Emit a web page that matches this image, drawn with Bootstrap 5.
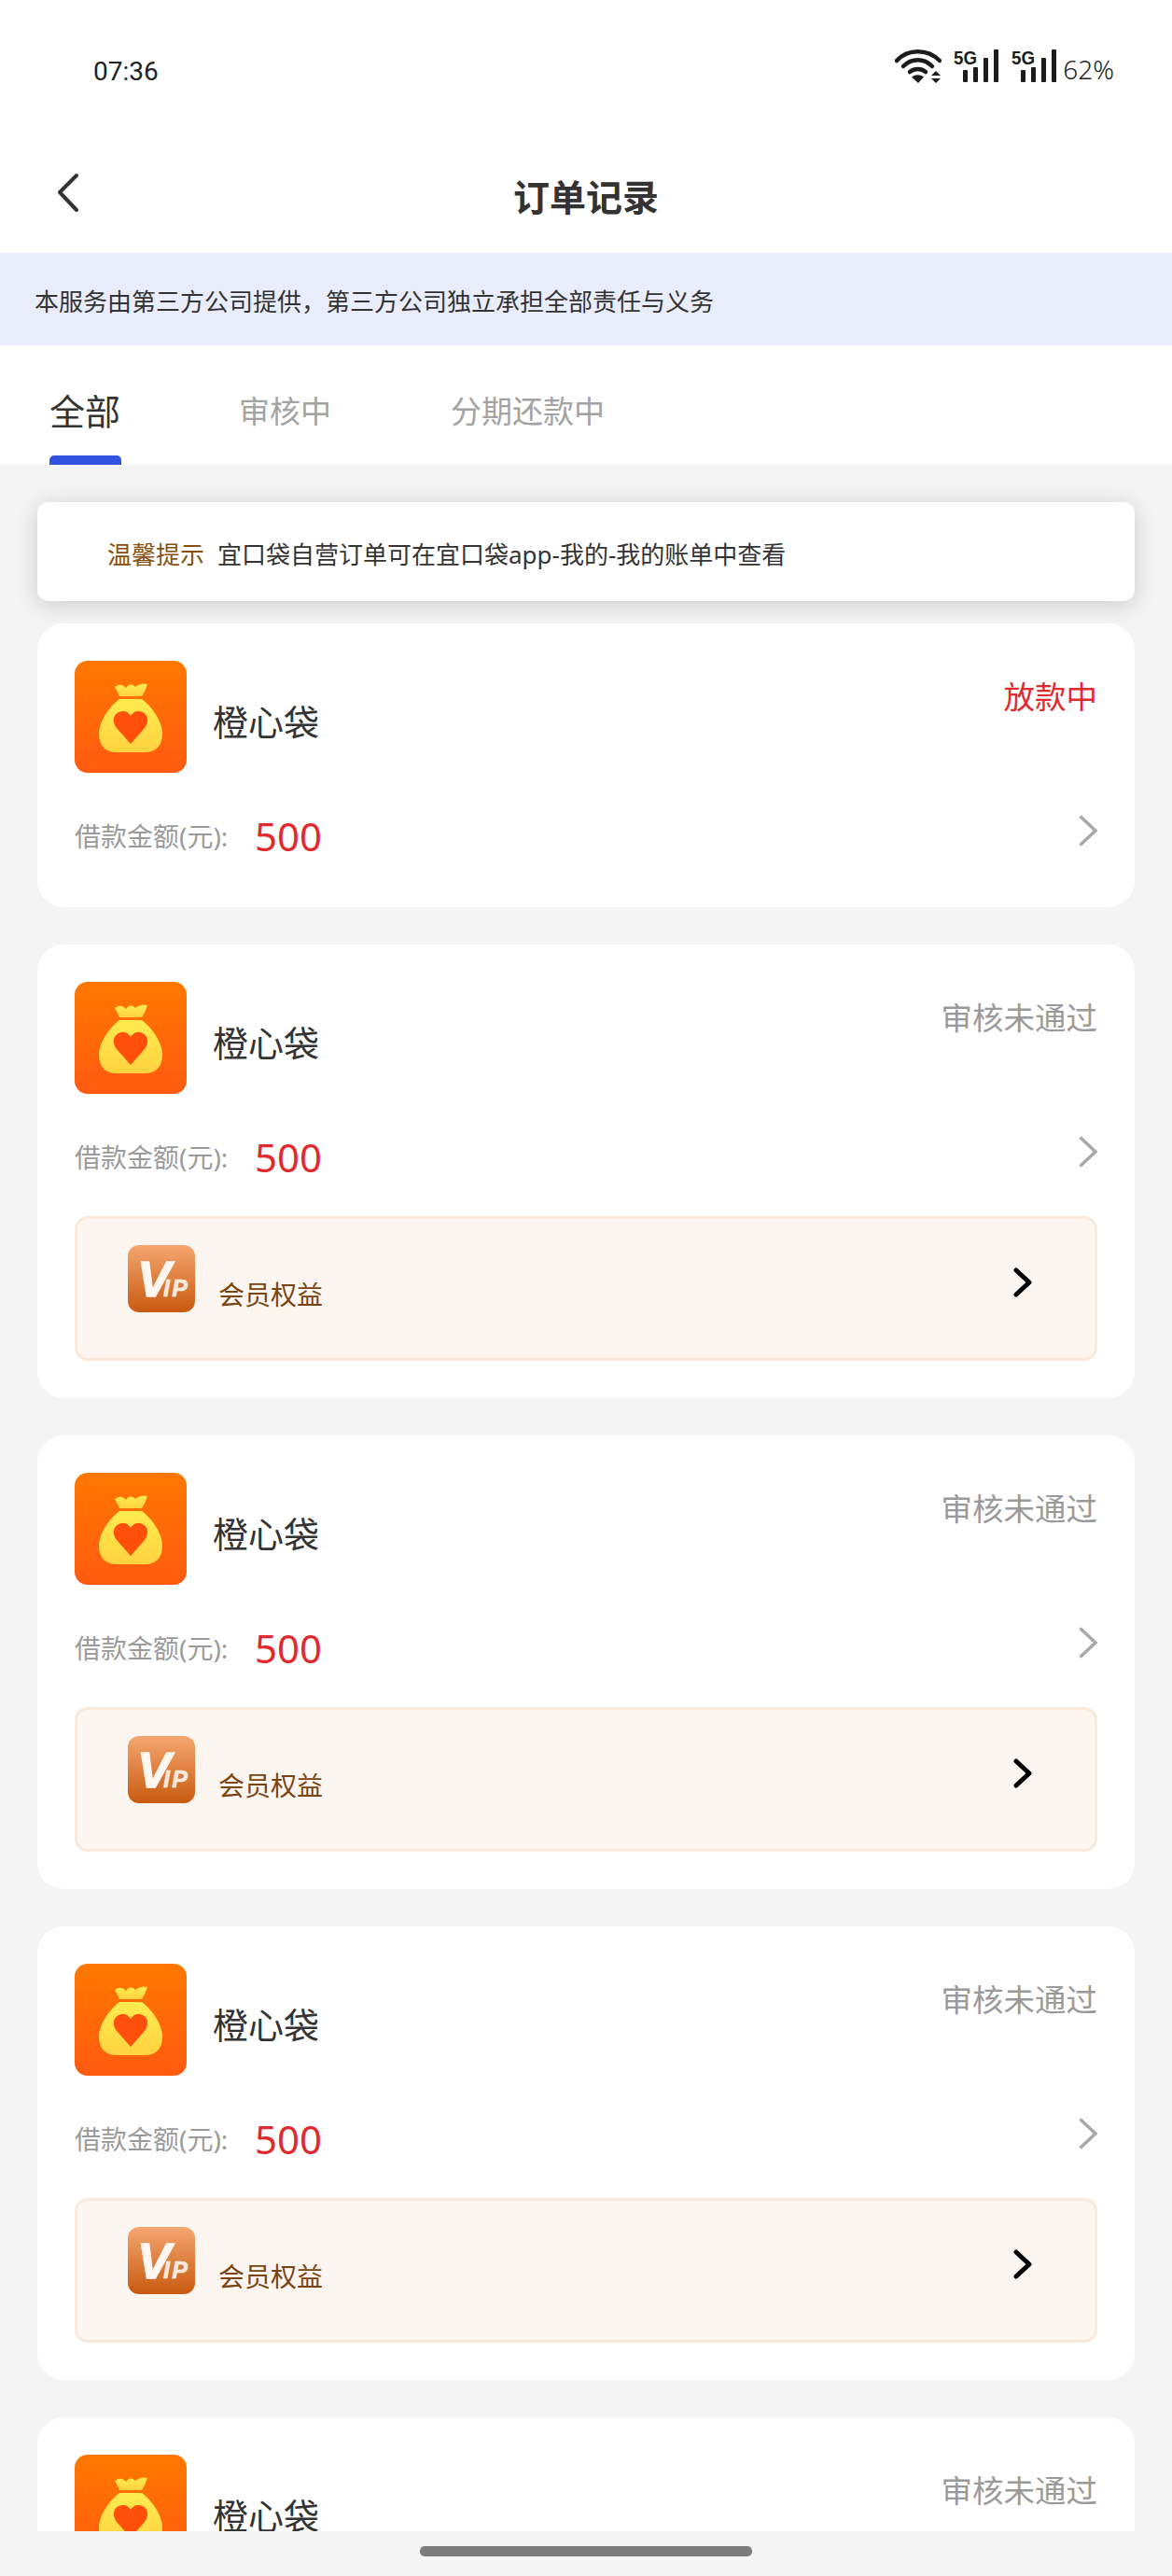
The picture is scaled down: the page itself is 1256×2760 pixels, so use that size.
<!DOCTYPE html>
<html lang="zh-CN">
<head>
  <meta charset="UTF-8" />
  <meta name="viewport" content="width=device-width, initial-scale=1" />
  <title>订单记录</title>
  <link href="https://cdn.jsdelivr.net/npm/bootstrap@5.3.2/dist/css/bootstrap.min.css" rel="stylesheet">
  <style>
    body { font-family: "Noto Sans", "Noto Sans CJK SC", sans-serif; background: #f4f4f4; color: #333; }
    .screen { width: 1256px; height: 2760px; }
    .screen > * { flex-shrink: 0; }
    .status-bar { height: 150px; padding: 53px 62px 0 100px; }
    .status-time { font-family: Roboto, sans-serif; font-size: 28px; line-height: 48px; color: #222; }
    .status-pct { font-size: 28px; line-height: 44px; font-weight: 300; color: #222; margin-left: 5px; margin-top: -1px; }
    .wifi-icon { margin-right: 13px; }
    .signal-next { margin-left: 12px; }
    .top-nav { height: 121px; }
    .back-btn { left: 58px; top: 34px; }
    .nav-title { font-size: 39px; font-weight: 600; line-height: 56px; color: #333; }
    .notice { height: 99px; padding: 5px 0 0 37px; background: #e9edfb; font-size: 26px; color: #333; }
    .tab-bar { height: 128px; padding-left: 53px; gap: 126px; }
    .tab-item { font-size: 33px; line-height: 44px; color: #a3a3a3; padding-top: 49px; margin-right: 2px; height: 128px; }
    .tab-item.on { font-size: 38px; color: #333; width: 77px; margin-right: 0; padding-top: 48px; }
    .tab-item.on::after { content: ""; position: absolute; left: 0; bottom: 0; width: 77px; height: 10px; border-radius: 5px 5px 0 0; background: #3452e1; }
    .list-area { min-height: 0; padding: 40px 40px 0; flex-shrink: 1 !important; }
    .tip-box { height: 106px; padding: 6px 0 0 75px; gap: 14px; border-radius: 12px; box-shadow: 0 4px 26px rgba(0,0,0,.17); font-size: 26px; color: #333; margin-bottom: 24px; }
    .tip-label { color: #85500f; }
    .order-card { padding: 40px 40px 40px; border-radius: 28px; margin-bottom: 40px; flex-shrink: 0; }
    .app-name { font-size: 38px; line-height: 50px; margin: 40px 0 0 28px; color: #333; }
    .order-state { font-size: 33.500px; line-height: 44px; margin-top: 16px; color: #9a9a9a; }
    .order-state.lending { color: #e12a30; }
    .amount-row { height: 56px; margin: 40px 0 8px; }
    .amount-label { font-size: 28px; color: #9a9a9a; width: 193px; }
    .amount-num { font-size: 42px; color: #e12a30; line-height: 56px; }
    .arrow-gray { margin-bottom: 12px; }
    .vip-box { height: 155px; margin-top: 35px; padding: 28px 67px 0 54px; border: 3px solid #f9e9dd; border-radius: 14px; background: #fdf6f0; }
    .vip-text { font-size: 28px; line-height: 40px; margin: 33px 0 0 25px; color: #7b4310; }
    .vip-arrow { margin-top: 24px; }
    .home-strip { height: 48px; padding-top: 16px; }
    .home-handle { width: 356px; height: 11px; border-radius: 5px; background: #7c7c7c; }
  </style>
</head>

<body class="m-0">
<svg width="0" height="0" class="position-absolute">
  <defs>
    <linearGradient id="bagBg" x1="0" y1="0" x2="0" y2="1"><stop offset="0" stop-color="#ff7800"/><stop offset="1" stop-color="#ff5a10"/></linearGradient>
    <linearGradient id="bagFill" x1="0" y1="0" x2="0" y2="1"><stop offset="0" stop-color="#ffec4f"/><stop offset="1" stop-color="#ffd240"/></linearGradient>
    <linearGradient id="vipBg" x1="0" y1="0" x2="0" y2="1"><stop offset="0" stop-color="#f5a670"/><stop offset="1" stop-color="#c85a10"/></linearGradient>
    <symbol id="bagIcon" viewBox="0 0 120 120">
      <rect width="120" height="120" rx="14" fill="url(#bagBg)"/>
      <path d="M43 28Q50 23 55 29Q60 22 65 28Q71 23 78 25Q76 32 72 38H48Q46 33 43 28Z" fill="url(#bagFill)"/>
      <path d="M48 41H72C84 50 94 66 94 78C94 92 86 98 76 98H44C34 98 26 92 26 78C26 66 36 50 48 41Z" fill="url(#bagFill)"/>
      <path d="M60 89L45 72C38 62 44 54 52 54C56 54 58 56 60 59C62 56 64 54 68 54C76 54 82 62 75 72Z" fill="#ff4f0a"/>
    </symbol>
    <symbol id="vipIcon" viewBox="0 0 72 72">
      <rect width="72" height="72" rx="12" fill="url(#vipBg)"/>
      <text x="10" y="55" font-family="Liberation Sans" font-weight="700" font-style="italic" font-size="54" textLength="36" lengthAdjust="spacingAndGlyphs" stroke="#fff7ef" stroke-width="1.500" fill="#fff7ef">V</text>
      <text x="38" y="55" font-family="Liberation Sans" font-weight="700" font-style="italic" font-size="25" textLength="26" stroke="#fff7ef" stroke-width=".6" fill="#fff7ef" fill-opacity=".9">IP</text>
    </symbol>
    <symbol id="arrowGray" viewBox="0 0 20 34"><path d="M1.500 1.500L18 17L1.500 32.500" fill="none" stroke="#a8a8a8" stroke-width="3.500"/></symbol>
    <symbol id="arrowBlack" viewBox="0 0 20 32"><path d="M3 3L17 16L3 29" fill="none" stroke="#000" stroke-width="5" stroke-linecap="round" stroke-linejoin="round"/></symbol>
    <symbol id="signalIcon" viewBox="0 0 50 36">
      <text x="0" y="16" font-family="Liberation Sans" font-weight="700" font-size="21" textLength="25" lengthAdjust="spacingAndGlyphs" fill="#1c1c1c">5G</text>
      <rect x="10" y="22" width="5" height="13" rx="1" fill="#1c1c1c"/>
      <rect x="21" y="19" width="5" height="16" rx="1" fill="#1c1c1c"/>
      <rect x="32" y="9" width="5" height="26" rx="1" fill="#1c1c1c"/>
      <rect x="43" y="0" width="5" height="35" rx="1" fill="#1c1c1c"/>
    </symbol>
  </defs>
</svg>

<div class="screen d-flex flex-column overflow-hidden">
  <div class="status-bar bg-white d-flex justify-content-between align-items-start">
    <span class="status-time">07:36</span>
    <div class="d-flex align-items-start">
      <svg width="50" height="36" viewBox="0 0 50 36" class="wifi-icon">
        <g fill="none" stroke="#1c1c1c" stroke-width="4.500" stroke-linecap="round">
          <path d="M2 12C14 -1 35 -1 48 12"/>
          <path d="M9 18C18 9 31 9 40 18"/>
          <path d="M16 24C21 20 28 20 33 24"/>
        </g>
        <path d="M25 36L18 29.500C22 26.500 27 26.500 31 29.500Z" fill="#1c1c1c"/>
        <path d="M44 23L49 28H39ZM44 36L39 31H49Z" fill="#1c1c1c"/>
      </svg>
      <svg width="50" height="36"><use href="#signalIcon"/></svg>
      <svg width="50" height="36" class="signal-next"><use href="#signalIcon"/></svg>
      <span class="status-pct">62%</span>
    </div>
  </div>

  <nav class="top-nav bg-white position-relative d-flex justify-content-center align-items-center">
    <svg class="back-btn position-absolute" width="28" height="44" viewBox="0 0 28 44"><path d="M24 4L6 22L24 41" fill="none" stroke="#333" stroke-width="4" stroke-linecap="round" stroke-linejoin="round"/></svg>
    <span class="nav-title">订单记录</span>
  </nav>

  <div class="notice d-flex align-items-center">本服务由第三方公司提供，第三方公司独立承担全部责任与义务</div>

  <div class="tab-bar bg-white d-flex">
    <div class="tab-item on position-relative">全部</div>
    <div class="tab-item">审核中</div>
    <div class="tab-item">分期还款中</div>
  </div>

  <div class="list-area flex-grow-1 overflow-hidden d-flex flex-column">
    <div class="tip-box bg-white d-flex align-items-center flex-shrink-0">
      <span class="tip-label">温馨提示</span>
      <span>宜口袋自营订单可在宜口袋app-我的-我的账单中查看</span>
    </div>

    <div class="order-card bg-white">
      <div class="d-flex align-items-start">
        <svg width="120" height="120"><use href="#bagIcon"/></svg>
        <span class="app-name">橙心袋</span>
        <span class="order-state lending ms-auto">放款中</span>
      </div>
      <div class="amount-row d-flex align-items-center">
        <span class="amount-label">借款金额(元):</span>
        <span class="amount-num">500</span>
        <svg class="arrow-gray ms-auto" width="20" height="34"><use href="#arrowGray"/></svg>
      </div>
    </div>

    <div class="order-card bg-white">
      <div class="d-flex align-items-start">
        <svg width="120" height="120"><use href="#bagIcon"/></svg>
        <span class="app-name">橙心袋</span>
        <span class="order-state ms-auto">审核未通过</span>
      </div>
      <div class="amount-row d-flex align-items-center">
        <span class="amount-label">借款金额(元):</span>
        <span class="amount-num">500</span>
        <svg class="arrow-gray ms-auto" width="20" height="34"><use href="#arrowGray"/></svg>
      </div>
      <div class="vip-box d-flex align-items-start">
        <svg width="72" height="72"><use href="#vipIcon"/></svg>
        <span class="vip-text">会员权益</span>
        <svg class="vip-arrow ms-auto" width="20" height="32"><use href="#arrowBlack"/></svg>
      </div>
    </div>

    <div class="order-card bg-white">
      <div class="d-flex align-items-start">
        <svg width="120" height="120"><use href="#bagIcon"/></svg>
        <span class="app-name">橙心袋</span>
        <span class="order-state ms-auto">审核未通过</span>
      </div>
      <div class="amount-row d-flex align-items-center">
        <span class="amount-label">借款金额(元):</span>
        <span class="amount-num">500</span>
        <svg class="arrow-gray ms-auto" width="20" height="34"><use href="#arrowGray"/></svg>
      </div>
      <div class="vip-box d-flex align-items-start">
        <svg width="72" height="72"><use href="#vipIcon"/></svg>
        <span class="vip-text">会员权益</span>
        <svg class="vip-arrow ms-auto" width="20" height="32"><use href="#arrowBlack"/></svg>
      </div>
    </div>

    <div class="order-card bg-white">
      <div class="d-flex align-items-start">
        <svg width="120" height="120"><use href="#bagIcon"/></svg>
        <span class="app-name">橙心袋</span>
        <span class="order-state ms-auto">审核未通过</span>
      </div>
      <div class="amount-row d-flex align-items-center">
        <span class="amount-label">借款金额(元):</span>
        <span class="amount-num">500</span>
        <svg class="arrow-gray ms-auto" width="20" height="34"><use href="#arrowGray"/></svg>
      </div>
      <div class="vip-box d-flex align-items-start">
        <svg width="72" height="72"><use href="#vipIcon"/></svg>
        <span class="vip-text">会员权益</span>
        <svg class="vip-arrow ms-auto" width="20" height="32"><use href="#arrowBlack"/></svg>
      </div>
    </div>

    <div class="order-card bg-white">
      <div class="d-flex align-items-start">
        <svg width="120" height="120"><use href="#bagIcon"/></svg>
        <span class="app-name">橙心袋</span>
        <span class="order-state ms-auto">审核未通过</span>
      </div>
    </div>
  </div>

  <div class="home-strip d-flex justify-content-center">
    <div class="home-handle"></div>
  </div>
</div>

<script src="https://cdn.jsdelivr.net/npm/bootstrap@5.3.2/dist/js/bootstrap.bundle.min.js"></script>
</body>
</html>
